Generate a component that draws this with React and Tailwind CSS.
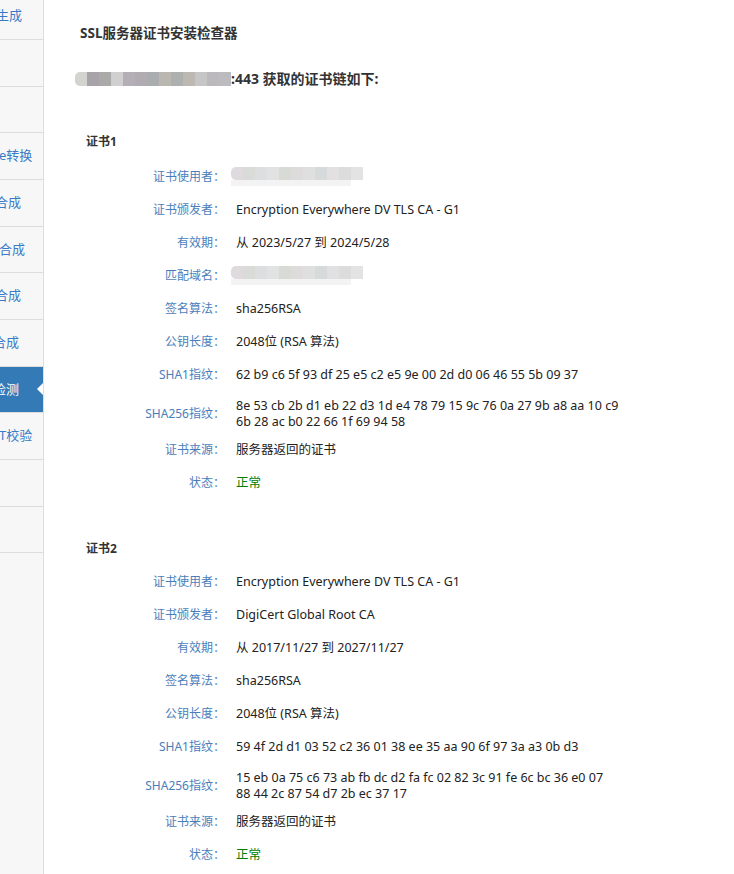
import React from "react";

const sideItems = [
  { text: "生成", ml: "ml-[-4px]" },
  { text: "", ml: "" },
  { text: "", ml: "" },
  { text: "e转换", ml: "ml-[-1px]" },
  { text: "合成", ml: "ml-[-5px]" },
  { text: "合成", ml: "ml-[-1px]" },
  { text: "合成", ml: "ml-[-5px]" },
  { text: "合成", ml: "ml-[-7px]" },
  { text: "检测", ml: "ml-[-7px]", active: true },
  { text: "T校验", ml: "ml-[-1px]" },
  { text: "", ml: "" },
  { text: "", ml: "" },
];

const headMosaic = [
  "bg-[#d3d3cf]",
  "bg-[#a8a3a8]",
  "bg-[#aaaaa8]",
  "bg-[#d0d0d0]",
  "bg-[#b4aeb6]",
  "bg-[#b0acb2]",
  "bg-[#a9adad]",
  "bg-[#bab6b0]",
  "bg-[#adb0ae]",
  "bg-[#bdb8b1]",
  "bg-[#c6c6c6]",
  "bg-[#bcb9bc]",
  "bg-[#bcbcc0]",
];

const lightMosaic = [
  "bg-[#dedadd]",
  "bg-[#d9dbd9]",
  "bg-[#dcdedf]",
  "bg-[#e2e2e2]",
  "bg-[#d8dad6]",
  "bg-[#dddbdc]",
  "bg-[#e0dfe0]",
  "bg-[#d6dadb]",
  "bg-[#e2e0e0]",
  "bg-[#dcdcdc]",
  "bg-[#e3e3e3]",
];

function Mosaic({ colors, w, h }) {
  return (
    <span className={`inline-flex align-middle ${h} overflow-hidden rounded-l-[5px]`}>
      {colors.map((c, i) => (
        <span key={i} className={`${w} h-full ${c}`} />
      ))}
    </span>
  );
}

function Row({ label, children, tall }) {
  return (
    <div
      className={
        tall
          ? "flex items-center min-h-[42px] pt-[3px]"
          : "flex items-center h-[33px]"
      }
    >
      <div className="w-[139px] shrink-0 text-right text-[#4a7ebb] text-[12px] leading-[16px]">
        {label}：
      </div>
      <div className="pl-[11px] text-[#222] text-[12.5px] leading-[16px]">
        {children}
      </div>
    </div>
  );
}

function Blur() {
  return (
    <span className="flex flex-col ml-[-5px]">
      <Mosaic colors={lightMosaic} w="w-[12px]" h="h-[13px]" />
      <span className="block w-[120px] h-[6px] bg-[#f3f3f3]" />
    </span>
  );
}

export default function App() {
  return (
    <div className="flex w-[734px] min-h-[874px] bg-white font-['Noto_Sans','Noto_Sans_CJK_SC',sans-serif] overflow-hidden">
      <aside className="w-[44px] shrink-0 bg-[#f7f7f7] border-r border-[#dddddd] overflow-hidden">
        <div className="mt-[-6.67px]">
          {sideItems.map((it, i) => (
            <div
              key={i}
              className={
                "relative h-[46.67px] border-b border-[#dddddd] flex items-center overflow-hidden whitespace-nowrap text-[13px] " +
                (it.active ? "bg-[#337ab7] text-white" : "text-[#3a7bc8]")
              }
            >
              <span className={it.ml}>{it.text}</span>
              {it.active && (
                <span className="absolute right-0 top-1/2 -translate-y-1/2 w-0 h-0 border-y-[6px] border-y-transparent border-r-[6px] border-r-white" />
              )}
            </div>
          ))}
        </div>
      </aside>
      <main className="flex-1 pl-[36px] pt-[23px] text-[#333]">
        <div className="text-[13.5px] leading-[20px] font-bold">SSL服务器证书安装检查器</div>
        <div className="mt-[26px] ml-[-5px] flex items-center text-[14px] leading-[20px] font-bold">
          <Mosaic colors={headMosaic} w="w-[12px]" h="h-[14px]" />
          <span>:443 获取的证书链如下:</span>
        </div>

        <div className="ml-[6px] mt-[43px]">
          <div className="text-[12px] leading-[20px] font-bold">证书1</div>
          <div className="mt-[8px]">
            <Row label="证书使用者"><Blur /></Row>
            <Row label="证书颁发者">Encryption Everywhere DV TLS CA - G1</Row>
            <Row label="有效期">从 2023/5/27 到 2024/5/28</Row>
            <Row label="匹配域名"><Blur /></Row>
            <Row label="签名算法">sha256RSA</Row>
            <Row label="公钥长度">2048位 (RSA 算法)</Row>
            <Row label="SHA1指纹">62 b9 c6 5f 93 df 25 e5 c2 e5 9e 00 2d d0 06 46 55 5b 09 37</Row>
            <Row label="SHA256指纹" tall>
              8e 53 cb 2b d1 eb 22 d3 1d e4 78 79 15 9c 76 0a 27 9b a8 aa 10 c9
              <br />
              6b 28 ac b0 22 66 1f 69 94 58
            </Row>
            <Row label="证书来源">服务器返回的证书</Row>
            <Row label="状态"><span className="text-[#008000]">正常</span></Row>
          </div>

          <div className="mt-[40px] text-[12px] leading-[20px] font-bold">证书2</div>
          <div className="mt-[6px]">
            <Row label="证书使用者">Encryption Everywhere DV TLS CA - G1</Row>
            <Row label="证书颁发者">DigiCert Global Root CA</Row>
            <Row label="有效期">从 2017/11/27 到 2027/11/27</Row>
            <Row label="签名算法">sha256RSA</Row>
            <Row label="公钥长度">2048位 (RSA 算法)</Row>
            <Row label="SHA1指纹">59 4f 2d d1 03 52 c2 36 01 38 ee 35 aa 90 6f 97 3a a3 0b d3</Row>
            <Row label="SHA256指纹" tall>
              15 eb 0a 75 c6 73 ab fb dc d2 fa fc 02 82 3c 91 fe 6c bc 36 e0 07
              <br />
              88 44 2c 87 54 d7 2b ec 37 17
            </Row>
            <Row label="证书来源">服务器返回的证书</Row>
            <Row label="状态"><span className="text-[#008000]">正常</span></Row>
          </div>
        </div>
      </main>
    </div>
  );
}
